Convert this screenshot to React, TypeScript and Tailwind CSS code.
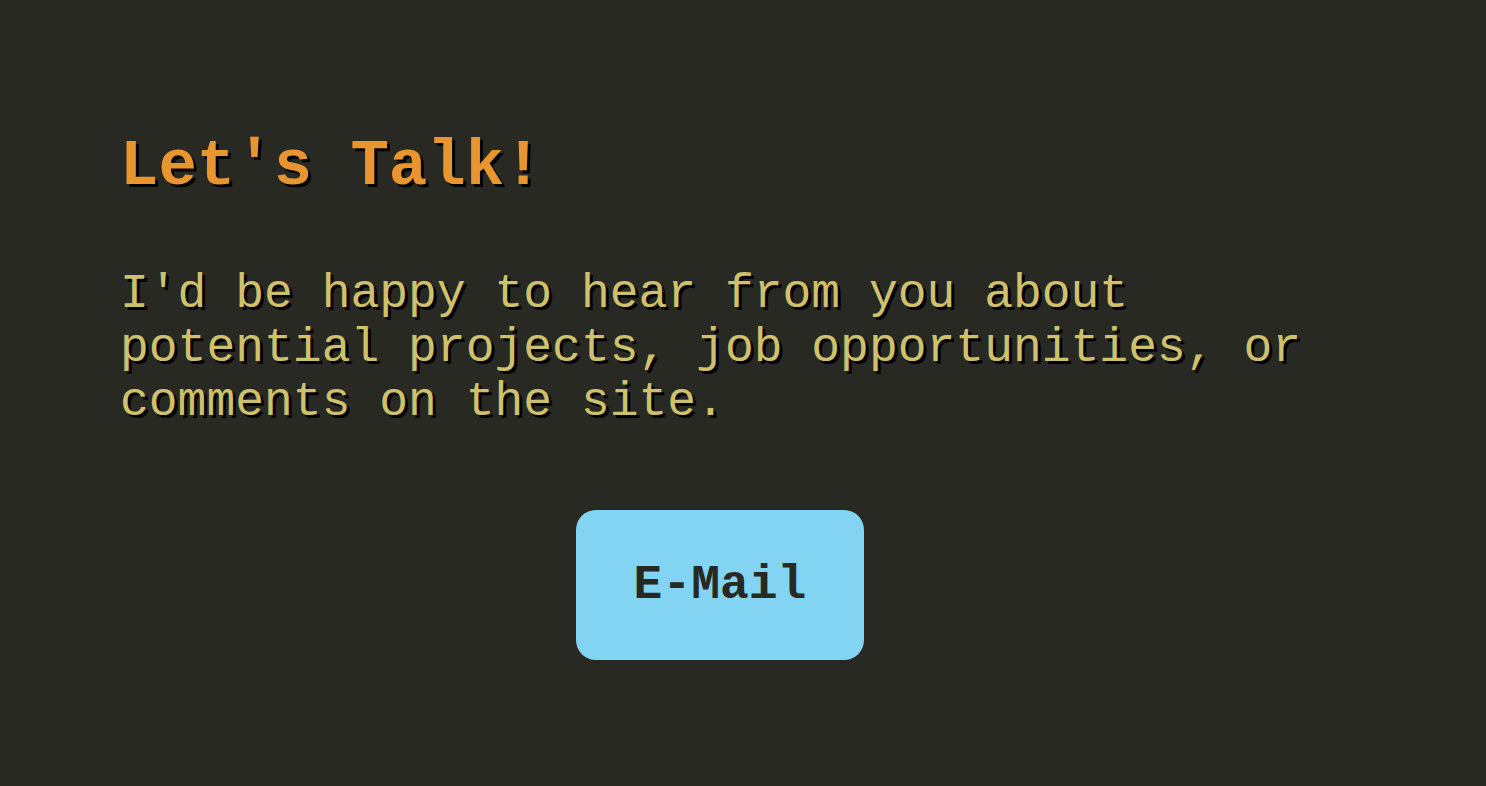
export default function App() {
  return (
    <div className="min-h-[786px] bg-[#292924] px-[120px] pt-[135px] font-['Courier_New','Nimbus_Mono_PS','FreeMono','Courier','Liberation_Mono',monospace]">
      <h1 className="text-[64px] leading-[64px] font-bold text-[#e8952f] [text-shadow:3px_3px_0_#000]">
        Let's Talk!
      </h1>
      <p className="mt-[68px] text-[48px] leading-[54px] text-[#cfc16b] [text-shadow:3px_3px_0_#000]">
        I'd be happy to hear from you about potential projects, job opportunities, or comments on the site.
      </p>
      <a
        href="#"
        className="mt-[81px] ml-[456px] flex h-[150px] w-[288px] items-center justify-center rounded-[20px] bg-[#83d4f2] text-[48px] font-bold text-[#292924]"
      >
        E-Mail
      </a>
    </div>
  )
}
